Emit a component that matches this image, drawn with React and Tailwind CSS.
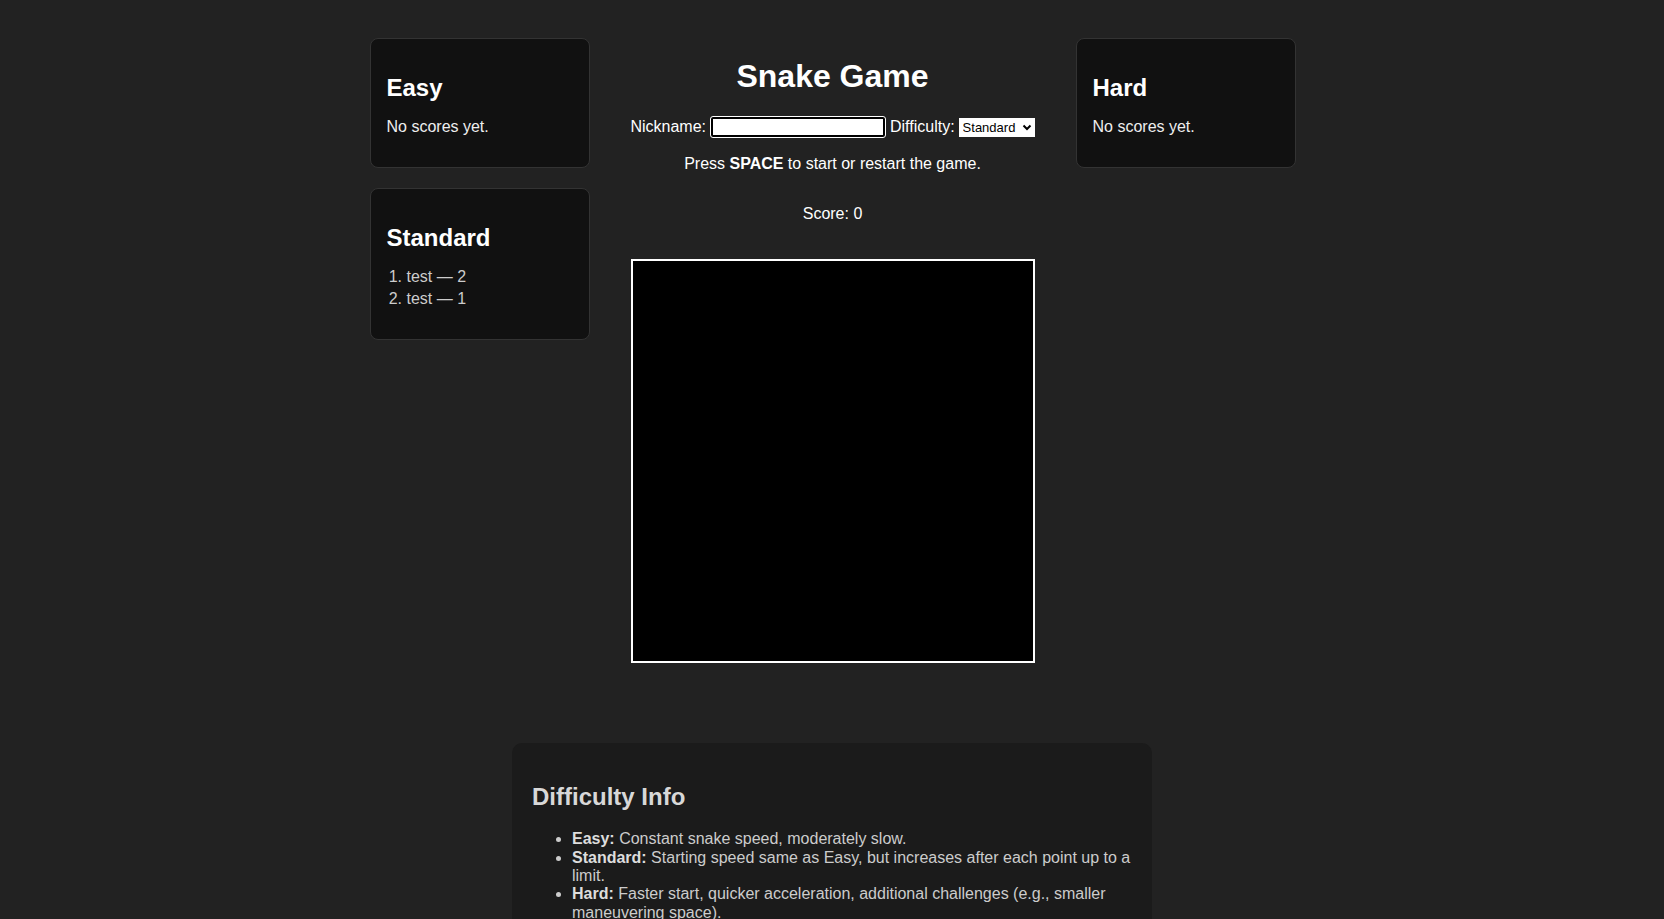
import { useState } from "react";

const boards = {
  Easy: [],
  Standard: [
    { name: "test", score: 2 },
    { name: "test", score: 1 },
  ],
  Hard: [],
};

function ScoreCard({ title, scores }) {
  return (
    <div className="w-[220px] rounded-lg border border-[#333] bg-[#111] px-4 pt-[16px] pb-[15px]">
      <h2 className="mt-[19px] mb-[15px] text-[24px] font-bold leading-[27.6px] text-white">{title}</h2>
      {scores.length === 0 ? (
        <p className="my-4 text-[16px] leading-[18.4px] text-[#eee]">No scores yet.</p>
      ) : (
        <ol className="my-4 list-decimal pl-5 text-[16px] leading-[18.4px] text-[#ccc]">
          {scores.map((s, i) => (
            <li key={i} className="mb-[4px] last:mb-0">
              {s.name} — {s.score}
            </li>
          ))}
        </ol>
      )}
    </div>
  );
}

export default function App() {
  const [nick, setNick] = useState("");
  const [difficulty, setDifficulty] = useState("Standard");

  return (
    <div className="min-h-[919px] bg-[#222] font-['Liberation_Sans',Arial,sans-serif] text-white">
      <div className="flex items-start justify-center gap-5 pt-[38px]">
        <div className="ml-[1px] flex flex-col gap-5">
          <ScoreCard title="Easy" scores={boards.Easy} />
          <ScoreCard title="Standard" scores={boards.Standard} />
        </div>

        <div className="flex w-[446px] flex-col items-center text-center">
          <h1 className="mt-[20px] mb-[21px] text-[32px] font-bold leading-[36.8px]">Snake Game</h1>
          <div className="flex h-[23px] items-center text-[16px] leading-[18.4px]">
            <label className="mr-[1px]">Nickname:</label>
            <input
              value={nick}
              onChange={(e) => setNick(e.target.value)}
              className="mx-[4px] h-[20px] w-[174px] rounded-[2px] border-2 border-black bg-white px-[2px] text-[13px] text-black outline-1 outline-white"
            />
            <label className="ml-[1px]">Difficulty:</label>
            <div className="relative ml-[4px] h-[19px] w-[76px] bg-white text-left text-[13px] leading-[19px] text-black">
              <select
                value={difficulty}
                onChange={(e) => setDifficulty(e.target.value)}
                className="h-full w-full appearance-none bg-transparent pl-[4px] font-['Liberation_Sans',Arial,sans-serif] text-[13px] outline-none"
              >
                <option>Easy</option>
                <option>Standard</option>
                <option>Hard</option>
              </select>
              <svg className="pointer-events-none absolute right-[3px] top-[5px]" width="10" height="9" viewBox="0 0 10 9">
                <path d="M1.5 2.5 L5 6 L8.5 2.5" fill="none" stroke="black" strokeWidth="2" />
              </svg>
            </div>
          </div>
          <p className="mt-[16px] text-[16px] leading-[18.4px]">
            Press <b>SPACE</b> to start or restart the game.
          </p>
          <p className="mt-[32px] text-[16px] leading-[18.4px]">Score: 0</p>
          <canvas width="400" height="400" className="mt-[35px] box-content border-2 border-white bg-black" />
        </div>

        <div className="flex flex-col gap-5">
          <ScoreCard title="Hard" scores={boards.Hard} />
        </div>
      </div>

      <div className="mx-auto mt-[80px] w-[640px] rounded-[10px] bg-[#1b1b1b] px-5 pt-5 pb-5">
        <h2 className="mt-[20px] mb-[20px] text-[24px] font-bold leading-[27.6px] text-[#d8d8d8]">Difficulty Info</h2>
        <ul className="list-disc pl-10 text-[16px] leading-[18.4px] text-[#ccc]">
          <li>
            <b className="text-[#ddd]">Easy:</b> Constant snake speed, moderately slow.
          </li>
          <li>
            <b className="text-[#ddd]">Standard:</b> Starting speed same as Easy, but increases after each point up to a limit.
          </li>
          <li>
            <b className="text-[#ddd]">Hard:</b> Faster start, quicker acceleration, additional challenges (e.g., smaller maneuvering space).
          </li>
        </ul>
      </div>
    </div>
  );
}
